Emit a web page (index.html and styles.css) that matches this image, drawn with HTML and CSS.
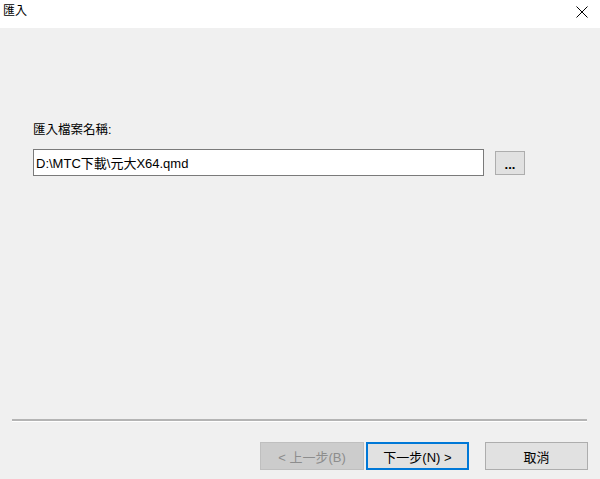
FILE: index.html
```html
<!DOCTYPE html>
<html lang="zh-Hant">
<head>
    <meta charset="UTF-8">
    <title>匯入</title>
    <link rel="stylesheet" href="styles.css">
</head>
<body>
    <div class="titlebar">
        <span class="title">匯入</span>
        <svg class="close" width="12" height="12" viewBox="0 0 12 12">
            <path d="M0.5 0.5 L11.5 11.5 M11.5 0.5 L0.5 11.5" stroke="#000" stroke-width="1" fill="none"/>
        </svg>
    </div>

    <div class="main">
        <label class="field-label" for="file">匯入檔案名稱:</label>
        <div class="file-row">
            <input type="text" id="file" class="file-input" value="D:\MTC下載\元大X64.qmd">
            <button class="browse-btn">...</button>
        </div>
    </div>

    <div class="footer">
        <div class="separator"></div>
        <div class="buttons">
            <button class="btn btn-disabled" disabled>&lt; 上一步(B)</button>
            <button class="btn btn-default">下一步(N) &gt;</button>
            <button class="btn btn-cancel">取消</button>
        </div>
    </div>
</body>
</html>
```

FILE: styles.css
```css
* {
    margin: 0;
    padding: 0;
    box-sizing: border-box;
    font-family: "Liberation Sans", "Noto Sans CJK TC", sans-serif;
}

body {
    width: 600px;
    height: 479px;
    background-color: #f0f0f0;
    display: flex;
    flex-direction: column;
    font-size: 12px;
    color: #000;
}

.titlebar {
    height: 28px;
    background-color: #fff;
    display: flex;
    align-items: flex-start;
    justify-content: space-between;
    padding: 3px 12px 0 3px;
}

.title {
    font-size: 12px;
    line-height: 16px;
}

.close {
    margin-top: 3px;
}

.main {
    flex: 1;
    padding: 94px 0 0 33px;
}

.field-label {
    display: block;
    font-size: 12.5px;
    line-height: 16px;
    margin-bottom: 11px;
}

.file-row {
    display: flex;
    align-items: center;
}

.file-input {
    width: 451px;
    height: 27px;
    border: 1px solid #7a7a7a;
    background-color: #fff;
    font-size: 13px;
    padding: 0 2px;
    outline: none;
}

.browse-btn {
    width: 30px;
    height: 24px;
    margin-left: 11px;
    background-color: #e1e1e1;
    border: 1px solid #adadad;
    font-size: 13px;
    font-weight: bold;
    padding-top: 3px;
}

.separator {
    margin: 0 13px 0 12px;
    border-top: 2px solid #b4b4b4;
    border-bottom: 1px solid #fff;
}

.buttons {
    display: flex;
    justify-content: flex-end;
    padding: 20px 12px 9px;
}

.btn {
    width: 103px;
    height: 28px;
    font-size: 13px;
    background-color: #e1e1e1;
    border: 1px solid #adadad;
    color: #000;
}

.btn-disabled {
    width: 104px;
    background-color: #cccccc;
    border-color: #bfbfbf;
    color: #8d8d8d;
}

.btn-default {
    margin-left: 2px;
    border: 2px solid #0078d7;
}

.btn-cancel {
    margin-left: 16px;
}
```
